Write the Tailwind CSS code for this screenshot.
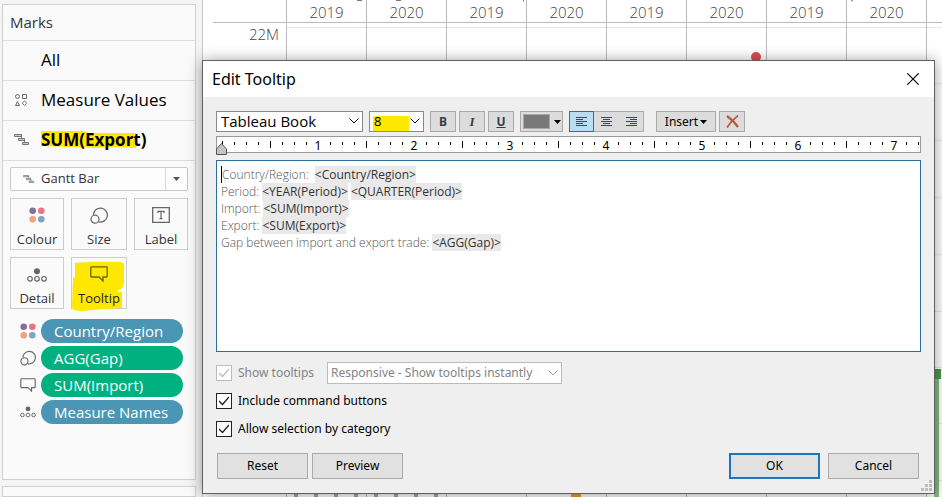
<!DOCTYPE html>
<html lang="en">
<head>
<meta charset="utf-8">
<title>Edit Tooltip</title>
<script src="https://cdn.jsdelivr.net/npm/@tailwindcss/browser@4"></script>
</head>
<body class="relative flex h-screen overflow-hidden bg-white font-['Open_Sans',sans-serif] text-[#333]">

<svg class="hidden" aria-hidden="true">
  <symbol id="dots" viewBox="0 0 16 16"><circle cx="3.7" cy="3.7" r="3.3" fill="#857096"/><circle cx="12.3" cy="3.7" r="3.3" fill="#f0727f"/><circle cx="3.7" cy="12.3" r="3.3" fill="#f2a27d"/><circle cx="12.3" cy="12.3" r="3.3" fill="#7da3cb"/></symbol>
  <symbol id="size" viewBox="0 0 18 17"><path d="M3.4 7.800A7 7 0 1 1 8.800 14.900" fill="none" stroke="#6b6b6b" stroke-width="1.3"/><circle cx="5" cy="12.2" r="4" fill="none" stroke="#6b6b6b" stroke-width="1.3"/></symbol>
  <symbol id="bubble" viewBox="0 0 18 16"><path d="M1.6.8h14.8q.8 0 .8.8v8.6q0 .8-.8.8H13v4L9 11H1.600q-.8 0-.8-.8V1.600q0-.8.8-.8z" fill="none" stroke="currentColor" stroke-width="1.300"/></symbol>
  <symbol id="detail" viewBox="0 0 20 14"><circle cx="10" cy="3.200" r="3" fill="#666"/><g fill="none" stroke="#666" stroke-width="1.200"><circle cx="3" cy="10.800" r="2.300"/><circle cx="10" cy="10.800" r="2.300"/><circle cx="17" cy="10.800" r="2.300"/></g></symbol>
  <symbol id="gantt" viewBox="0 0 16 11"><g fill="#ccc" stroke="#777" stroke-width="1"><path d="M.5.5h7v2h-7zM4.500 4.500h6v2h-6zM8.500 8.500h6v2h-6z"/></g><path d="M7.500 2v2.500M10.500 6v2.500" stroke="#777"/></symbol>
  <symbol id="chev" viewBox="0 0 10 6"><path d="M.5.5 5 5 9.500.5" fill="none" stroke="currentColor" stroke-width="1"/></symbol>
</svg>

<aside class="flex w-[203px] shrink-0 flex-col gap-1.5 border-r border-[#c8c8c8] bg-[#f4f4f4] pr-1.5 pl-0.5 pt-1">
  <section class="h-[476px] shrink-0 border border-[#d0d0d0] bg-[#fafafa]">
    <h2 class="flex h-9 items-center border-b border-[#dcdcdc] pl-[7px] text-[15px]">Marks</h2>
    <ul class="text-[17px] text-black">
      <li class="flex h-10 items-center border-b border-[#dcdcdc] pb-0.5 pl-[38px]">All</li>
      <li class="flex h-10 items-center border-b border-[#dcdcdc] pb-0.5 pl-3">
        <svg class="mr-3.5 h-3 w-3" viewBox="0 0 12 12" fill="none" stroke="#6b6b6b"><circle cx="2.500" cy="2.500" r="2"/><path d="M7.500.5h4v4h-4zM.5 11.500l2-4 2 4zM9.500 7l2.300 2.300-2.300 2.300-2.300-2.300z"/></svg>
        Measure Values</li>
      <li class="flex h-10 items-center border-b border-[#dcdcdc] pb-0.5 pl-[11px] font-bold">
        <svg class="mr-[11px] h-[11px] w-4"><use href="#gantt"/></svg>
        <span class="relative isolate">
          <svg class="absolute top-[3px] left-0 -z-10 h-5 w-24" viewBox="0 0 96 20"><path d="M0 1h42l6 2h47v15l-20-1-20 1-55-2z" fill="#ffe800"/></svg>
          SUM(Export)</span></li>
    </ul>
    <div class="flex flex-col gap-[7px] px-[7px] pt-[6px]">
      <button class="flex h-6 items-center rounded-xs border border-[#c8c8c8] bg-white/60 pl-3 text-[13px]">
        <svg class="mr-1.5 h-2 w-3"><use href="#gantt"/></svg>Gantt Bar
        <span class="ml-auto flex h-full w-[22px] items-center justify-center border-l border-[#d8d8d8]"><svg class="h-1 w-[7px]" viewBox="0 0 7 4"><path d="M0 0h7L3.500 4z" fill="#555"/></svg></span>
      </button>
      <div class="grid grid-cols-[54px_56px_54px] gap-[7px] text-[13px]">
        <button class="flex h-[52px] flex-col items-center justify-between border border-[#ccc] pt-2"><svg class="h-4 w-4"><use href="#dots"/></svg>Colour</button>
        <button class="flex h-[52px] flex-col items-center justify-between border border-[#ccc] pt-2"><svg class="h-[17px] w-[18px]"><use href="#size"/></svg>Size</button>
        <button class="flex h-[52px] flex-col items-center justify-between border border-[#ccc] pt-2"><svg class="h-4 w-[18px]" viewBox="0 0 18 16"><path d="M.7.7h16.600v14.600H.7z" fill="none" stroke="#666" stroke-width="1.300"/><path d="M6 6V4.300h6V6M9 4.300v7.400M7.500 11.700h3" fill="none" stroke="#666" stroke-width="1.200"/></svg>Label</button>
        <button class="flex h-[52px] flex-col items-center justify-between border border-[#ccc] pt-2"><svg class="mt-0.5 h-3.5 w-5"><use href="#detail"/></svg>Detail</button>
        <button class="relative isolate flex h-[52px] flex-col items-center justify-between border border-[#ccc] pt-2 text-[#222]">
          <svg class="absolute top-0 left-0 -z-10 h-[54px] w-[54px]" viewBox="0 0 54 54"><path d="M3 5q20-2 46-1 3 1 3 4v16q0 6-5 8l-2 2h5v16q-18 1-30 2-12 2-18 0-2-1-2-4l1-28 2-1z" fill="#ffe800"/></svg>
          <svg class="h-4 w-[18px] text-[#6b6300]"><use href="#bubble"/></svg>Tooltip</button>
      </div>
      <ul class="mt-[3px] flex flex-col gap-[3px] pl-2.5 text-[15px] font-medium text-white">
        <li class="flex items-center gap-[5px]"><svg class="h-4 w-4"><use href="#dots"/></svg><span class="h-6 w-[142px] rounded-full bg-[#4a96b4] pl-[13px] leading-6">Country/Region</span></li>
        <li class="flex items-center gap-[5px]"><svg class="h-4 w-4"><use href="#size"/></svg><span class="h-6 w-[142px] rounded-full bg-[#00b180] pl-[13px] leading-6">AGG(Gap)</span></li>
        <li class="flex items-center gap-[5px]"><svg class="h-3.5 w-4 text-[#666]"><use href="#bubble"/></svg><span class="h-6 w-[142px] rounded-full bg-[#00b180] pl-[13px] leading-6">SUM(Import)</span></li>
        <li class="flex items-center gap-[5px]"><svg class="h-3 w-4"><use href="#detail"/></svg><span class="h-6 w-[142px] rounded-full bg-[#4a96b4] pl-[13px] leading-6">Measure Names</span></li>
      </ul>
    </div>
  </section>
  <section class="h-5 border border-[#d0d0d0] bg-[#fafafa]"></section>
</aside>

<main class="relative min-w-0 flex-1 overflow-hidden">
  <div class="ml-2.5 grid h-[23px] grid-cols-[73px_repeat(9,80px)] border-b border-[#bbb] text-center text-[15px] leading-[25px] font-light text-[#444]">
    <span></span>
    <span class="border-l border-[#bbb]">2019</span><span class="border-l border-[#bbb]">2020</span><span class="border-l border-[#bbb]">2019</span><span class="border-l border-[#bbb]">2020</span><span class="border-l border-[#bbb]">2019</span><span class="border-l border-[#bbb]">2020</span><span class="border-l border-[#bbb]">2019</span><span class="border-l border-[#bbb]">2020</span><span class="border-l border-[#bbb]"></span>
  </div>
  <p class="w-[76px] pt-px text-right text-[15px] leading-5 font-light text-[#444]">22M</p>
  <svg class="absolute top-0 left-0 h-[497px] w-[739px]" viewBox="0 0 739 497" aria-hidden="true">
    <path d="M83 27.500h656M83 83.500h656M83 140.500h656M83 197.500h656M83 254.500h656M83 311.500h656M83 367.500h656M83 423.500h656M83 480.500h656" stroke="#e6e6e6"/>
    <path d="M83.500 23v474M163.500 23v474M243.500 23v474M323.500 23v474M403.500 23v474M483.500 23v474M563.500 23v474M643.500 23v474M723.500 23v474" stroke="#bbb"/>
    <path d="M154 .5h5M193 .5h5M320.500 0v1.500M648 1l2-1" stroke="#777" fill="none"/>
    <circle cx="553" cy="57" r="5" fill="#dc4e56"/>
    <path d="M731 369h7v10h-7z" fill="#4a9a48"/><path d="M731 379h5v118h-5z" fill="#84bb80"/>
    <path d="M91 493h4v4h-4zM111 493h4v4h-4zM131 493h4v4h-4zM151 493h4v4h-4zM171 493h4v4h-4zM191 493h4v4h-4zM211 493h4v4h-4zM231 493h4v4h-4z" fill="#96a6c6"/>
    <path d="M368 492h10v5h-10z" fill="#f09a28"/>
  </svg>
</main>

<div role="dialog" aria-labelledby="title" class="absolute top-[60px] right-[7px] left-[202px] border border-[#606060] bg-[#efefef] font-['Noto_Sans',sans-serif] text-[12px] text-black shadow-[0_1px_14px_rgba(0,0,0,0.4)]">
  <header class="flex h-9 items-center justify-between bg-white pr-[15px] pl-[9px]">
    <h1 id="title" class="text-[16px]">Edit Tooltip</h1>
    <button aria-label="Close"><svg class="h-3 w-3" viewBox="0 0 12 12"><path d="M.3.3l11.400 11.400M11.700.3.3 11.700" stroke="#000" stroke-width="1.100"/></svg></button>
  </header>

  <div class="px-[13px] pt-3.5 pb-3.5">
    <div class="flex h-[21px] items-stretch">
      <label class="relative mr-1.5 flex w-[147px]"><span class="sr-only">Font</span>
        <select class="w-full appearance-none border border-[#8a8a8a] bg-white pl-1 font-['Open_Sans',sans-serif] text-[15px] leading-[19px]"><option>Tableau Book</option></select>
        <svg class="pointer-events-none absolute top-[7px] right-1 h-1.5 w-2.5"><use href="#chev"/></svg></label>
      <label class="relative mr-1.5 flex w-[55px]"><span class="sr-only">Font size</span>
        <select class="w-full appearance-none border border-[#8a8a8a] bg-white bg-linear-to-r from-[#ffe800] from-[39px] to-white to-[39px] bg-no-repeat pl-1 text-[13px] leading-[19px] shadow-[inset_3px_0_0_#fff,inset_0_4px_0_#fff]"><option>8</option></select>
        <svg class="pointer-events-none absolute top-[7px] right-1 h-1.5 w-2.5"><use href="#chev"/></svg></label>
      <div class="mr-1.5 flex gap-[3px] text-[#333c48]">
        <button class="w-[26px] border border-[#aaa] bg-[#dcdcdc] leading-none font-bold">B</button>
        <button class="w-[26px] border border-[#aaa] bg-[#dcdcdc] font-['Liberation_Serif',serif] text-[13px] leading-none font-bold italic">I</button>
        <button class="w-[26px] border border-[#aaa] bg-[#dcdcdc] leading-none font-bold underline">U</button>
      </div>
      <button aria-label="Text colour" class="mr-1.5 flex w-[43px] items-center gap-1 border border-[#aaa] bg-[#dcdcdc] pl-0.5"><span class="h-[15px] w-[27px] border border-[#aaa] bg-[#787878]"></span><svg class="h-1 w-[7px]" viewBox="0 0 7 4"><path d="M0 0h7L3.500 4z"/></svg></button>
      <div class="mr-3 flex text-[#3c4656]">
        <button aria-label="Align left" class="flex w-[25px] items-center justify-center border border-[#2672b0] bg-[#bcdcf4]"><svg class="h-[9px] w-[11px]" viewBox="0 0 11 9"><path d="M0 .5h11M0 2.500h7M0 4.500h11M0 6.500h7M0 8.500h11" stroke="currentColor"/></svg></button>
        <button aria-label="Align centre" class="flex w-[25px] items-center justify-center border-y border-[#aaa] bg-[#dcdcdc]"><svg class="h-[9px] w-[11px]" viewBox="0 0 11 9"><path d="M0 .5h11M2 2.500h7M0 4.500h11M2 6.500h7M0 8.500h11" stroke="currentColor"/></svg></button>
        <button aria-label="Align right" class="flex w-[25px] items-center justify-center border border-l-0 border-[#aaa] bg-[#dcdcdc]"><svg class="h-[9px] w-[11px]" viewBox="0 0 11 9"><path d="M0 .5h11M4 2.500h7M0 4.500h11M4 6.500h7M0 8.500h11" stroke="currentColor"/></svg></button>
      </div>
      <button class="mr-[3px] flex w-[60px] items-center justify-center gap-0.5 border border-[#aaa] bg-[#dcdcdc] leading-none">Insert<svg class="h-1 w-[7px]" viewBox="0 0 7 4"><path d="M0 0h7L3.500 4z"/></svg></button>
      <button aria-label="Clear" class="flex w-[26px] items-center justify-center border border-[#aaa] bg-[#dcdcdc]"><svg class="h-[13px] w-[13px]" viewBox="0 0 13 13" fill="none" stroke="#b5593a"><path d="M1 1q6 4 11 11" stroke-width="2.200"/><path d="M12 .5Q5 6 1 12.500" stroke-width="1.600"/></svg></button>
    </div>

    <div class="relative mt-1">
      <div class="h-[17px] border border-[#999] bg-white">
        <svg id="ruler" class="h-[15px] w-full font-['Noto_Sans',sans-serif] text-[12px]" aria-hidden="true"></svg>
      </div>
      <svg class="absolute top-[7px] left-0 h-3 w-[11px]" viewBox="0 0 11 12"><path d="M.5 11.500V6l5-5.500 5 5.500v5.500z" fill="#c4c4c4" stroke="#555"/></svg>
    </div>

    <div contenteditable="true" role="textbox" aria-multiline="true" aria-label="Tooltip text" class="mt-[7px] h-[192px] border border-[#2a6f9e] bg-white pt-[5px] pl-1 font-['Open_Sans',sans-serif] text-[12px] leading-[17px] font-light text-[#555] [&_span]:inline-block [&_span]:bg-[#e9e9e9] [&_span]:font-normal [&_span]:text-[#333]">
      <p class="border-l border-black">Country/Region: &nbsp;<span>&lt;Country/Region&gt;</span></p>
      <p>Period: <span>&lt;YEAR(Period)&gt;</span> <span>&lt;QUARTER(Period)&gt;</span></p>
      <p>Import: <span>&lt;SUM(Import)&gt;</span></p>
      <p>Export: <span>&lt;SUM(Export)&gt;</span></p>
      <p>Gap between import and export trade: <span>&lt;AGG(Gap)&gt;</span></p>
    </div>

    <div class="mt-2.5 flex flex-col gap-1.5">
      <div class="flex h-[22px] items-center text-[#838383]">
        <label class="relative flex w-[111px] items-center gap-1.5"><input type="checkbox" checked disabled class="h-4 w-4 appearance-none border border-[#bbb] bg-white"><svg class="absolute left-[3px] h-2.5 w-2.5" viewBox="0 0 10 10"><path d="M0 5l3.500 3.500L10 1" fill="none" stroke="#bbb" stroke-width="1.400"/></svg>Show tooltips</label>
        <label class="relative flex h-full w-[235px]"><span class="sr-only">Tooltip behaviour</span>
          <select disabled class="w-full appearance-none border border-[#bbb] bg-white pl-[3px] opacity-100"><option>Responsive - Show tooltips instantly</option></select>
          <svg class="pointer-events-none absolute top-2 right-1 h-1.5 w-2.5 text-[#999]"><use href="#chev"/></svg></label>
      </div>
      <label class="relative flex h-[22px] items-center gap-1.5"><input type="checkbox" checked class="h-4 w-4 appearance-none border border-[#222] bg-white"><svg class="absolute left-[3px] h-2.5 w-2.5" viewBox="0 0 10 10"><path d="M0 5l3.500 3.500L10 1" fill="none" stroke="#222" stroke-width="1.400"/></svg>Include command buttons</label>
      <label class="relative flex h-[22px] items-center gap-1.5"><input type="checkbox" checked class="h-4 w-4 appearance-none border border-[#222] bg-white"><svg class="absolute left-[3px] h-2.5 w-2.5" viewBox="0 0 10 10"><path d="M0 5l3.500 3.500L10 1" fill="none" stroke="#222" stroke-width="1.400"/></svg>Allow selection by category</label>
    </div>

    <div class="mt-[13px] flex pr-0.5 pl-px">
      <button class="mr-1 h-[26px] w-[91px] border border-[#aaa] bg-[#e1e1e1]">Reset</button>
      <button class="h-[26px] w-[91px] border border-[#aaa] bg-[#e1e1e1]">Preview</button>
      <button class="mr-2 ml-auto h-[26px] w-[91px] border-2 border-[#1f75bb] bg-[#e1e1e1]">OK</button>
      <button class="h-[26px] w-[91px] border border-[#aaa] bg-[#e1e1e1]">Cancel</button>
    </div>
  </div>
  <svg class="absolute right-0.5 bottom-0.5 h-[11px] w-[11px]" viewBox="0 0 11 11"><path d="M8 0h3v3H8zM4 4h3v3H4zM8 4h3v3H8zM0 8h3v3H0zM4 8h3v3H4zM8 8h3v3H8z" fill="#bdbdbd"/></svg>
</div>

<script>
  // Ruler: one tick every 12px, a taller one on each half, a number on each whole.
  const NS = 'http://www.w3.org/2000/svg', ruler = document.getElementById('ruler');
  for (let i = 0; i <= 58; i++) {
    const x = 5 + i * 12;
    if (i && i % 8 === 0) {
      const t = document.createElementNS(NS, 'text');
      t.setAttribute('x', x); t.setAttribute('y', 13); t.setAttribute('text-anchor', 'middle');
      t.textContent = i / 8; ruler.append(t);
    } else {
      const r = document.createElementNS(NS, 'rect'), tall = i % 4 === 0;
      r.setAttribute('x', x); r.setAttribute('y', tall ? 4 : 5);
      r.setAttribute('width', 1); r.setAttribute('height', tall ? 7 : 3); ruler.append(r);
    }
  }
</script>
</body>
</html>
